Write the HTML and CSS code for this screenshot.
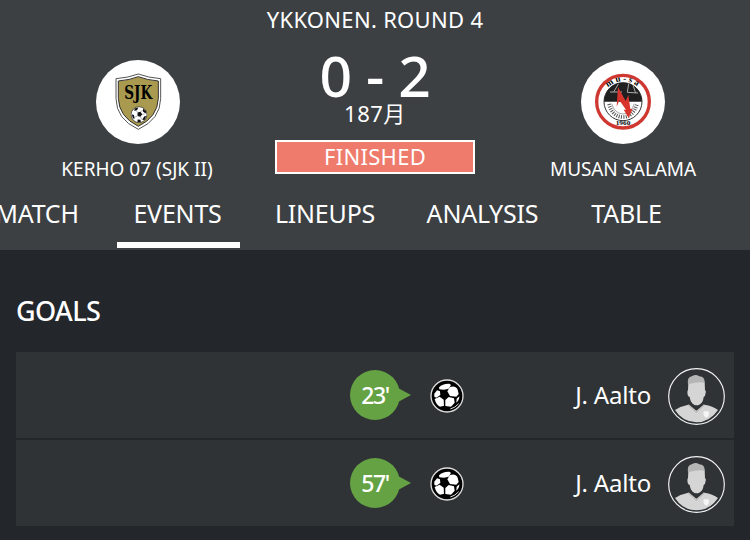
FILE: index.html
```
<!DOCTYPE html>
<html lang="en">
<head>
  <meta charset="UTF-8">
  <title>Kerho 07 (SJK II) - Musan Salama</title>
  <link rel="stylesheet" href="styles.css">
</head>
<body>

<!-- shared icons -->
<svg class="sprite" width="0" height="0">
  <symbol id="ball" viewBox="0 0 102 102">
    <circle cx="51" cy="51" r="48" fill="#000" stroke="#ddd" stroke-width="4"/>
    <g fill="#fff">
      <path d="M27 25 Q38 13 58 14 L63 18 L56 29 L42 32 L28 31Z"/>
      <path d="M60 24 Q76 18 83 32 L86 45 L79 53 L60 51 L52 37Z"/>
      <path d="M13 44 L21 34 L30 37 L31 48 L19 56 L13 53Z"/>
      <path d="M14 60 L29 53 L41 62 L42 80 L30 83 Q18 77 14 60Z"/>
      <path d="M46 63 L56 54 L72 58 L74 71 L63 83 L46 81Z"/>
      <path d="M80 59 L88 52 Q88 64 79 71Z"/>
    </g>
    <path d="M61 90 Q76 86 86 74" fill="none" stroke="#ddd" stroke-width="3"/>
  </symbol>
  <symbol id="player" viewBox="0 0 171 171">
    <circle cx="85.500" cy="85.500" r="83.500" fill="none" stroke="#f2f2f2" stroke-width="3.5"/>
    <path d="M61 46 L60 67 Q57 68 59 80 Q60 86 65 87 Q68 107 80 111 Q87 113 94 110 Q105 105 107 87 Q112 85 113 75 Q115 68 111 67 L110 42 Q98 31 61 46Z" fill="#d5d5d5"/>
    <path d="M60 49 Q56 27 73 24 Q83 18 94 25 Q111 26 110 44 Q91 40 60 49Z" fill="#b5b5b5"/>
    <path d="M21 126 Q39 114 61 110 L85 128 L109 110 Q135 114 150 126 Q125 163 85 163 Q44 162 21 126Z" fill="#d5d5d5"/>
    <path d="M61 110 L85 132 L109 110" fill="none" stroke="#bcbcbc" stroke-width="4"/>
    <path d="M106 131 Q115 127 123 131 Q124 146 115 149 Q106 146 106 131Z" fill="#f5f5f5"/>
  </symbol>
</svg>

<header class="header">
  <div class="round">YKKONEN. ROUND 4</div>

  <div class="match">
    <div class="team home">
      <svg class="logo" viewBox="0 0 252 252">
        <circle cx="126" cy="126" r="126" fill="#fff"/>
        <path d="M60 56 Q98 53 127 42 Q156 53 194 56 L194 116 Q193 178 127 208 Q61 178 60 116Z" fill="#fff" stroke="#555" stroke-width="3"/>
        <path d="M67 63 Q102 60 127 50 Q152 60 187 63 L187 115 Q185 171 127 199 Q69 171 67 115Z" fill="#aa9a50" stroke="#333" stroke-width="3"/>
        <text x="85" y="118" textLength="84" lengthAdjust="spacingAndGlyphs" class="sjk">SJK</text>
        <svg x="104" y="139" width="50" height="50" viewBox="0 0 46 46">
          <circle cx="23" cy="23" r="22" fill="#fff" stroke="#222" stroke-width="2"/>
          <path d="M19 17 L27 15 L32 22 L27 29 L19 27Z M11 6 L21 3 L18 10 L10 13Z M34 6 L43 14 L41 20 L34 14Z M3 22 L9 24 L11 34 L6 33Z M37 28 L43 27 L39 37 L32 38Z M19 36 L27 37 L28 43 L19 43Z" fill="#111"/>
          <path d="M19 17 L15 11 M27 15 L34 11 M32 22 L39 21 M27 29 L32 37 M19 27 L10 30" stroke="#777" stroke-width="1.500"/>
        </svg>
      </svg>
      <div class="team-name">KERHO 07 (SJK II)</div>
    </div>

    <div class="result">
      <div class="score">0 - 2</div>
      <div class="date">187月</div>
      <div class="status">FINISHED</div>
    </div>

    <div class="team away">
      <svg class="logo" viewBox="0 0 252 252">
        <circle cx="126" cy="126" r="126" fill="#fff"/>
        <circle cx="126" cy="125" r="79" fill="#fff" stroke="#cf3830" stroke-width="10"/>
        <circle cx="126" cy="125" r="57" fill="#fff" stroke="#333" stroke-width="3"/>
        <path d="M69 125 A57 57 0 0 1 183 125Z" fill="#202020"/>
        <path d="M87 96 H123 M112 72 L98 96 M143 71 L139 97 L171 99 M156 76 L164 99" fill="none" stroke="#aaa" stroke-width="3"/>
        <path d="M84 132 Q95 171 126 171 Q157 171 168 132" fill="none" stroke="#555" stroke-width="11" stroke-dasharray="3 4"/>
        <path d="M92 131 Q101 161 126 162 Q151 161 160 131" fill="none" stroke="#777" stroke-width="2"/>
        <path d="M107 140 L111 81 L134 123 L142 105 L148 147 L155 146 L143 174 L128 149 L135 149 L115 121Z" fill="#d9342b"/>
        <path id="top" d="M80 83 A66 66 0 0 1 174 84" fill="none"/>
        <text class="musa"><textPath href="#top" textLength="96" startOffset="1">mu-sa</textPath></text>
        <text x="104" y="195" textLength="44" lengthAdjust="spacingAndGlyphs" class="year">1960</text>
      </svg>
      <div class="team-name">MUSAN SALAMA</div>
    </div>
  </div>

  <nav class="tabs">
    <a class="tab">MATCH</a>
    <a class="tab active">EVENTS</a>
    <a class="tab">LINEUPS</a>
    <a class="tab">ANALYSIS</a>
    <a class="tab">TABLE</a>
  </nav>
</header>

<main class="events">
  <h2>GOALS</h2>
  <div class="event">
    <div class="minute">23'</div>
    <svg class="ball"><use href="#ball"/></svg>
    <div class="name">J. Aalto</div>
    <svg class="player"><use href="#player"/></svg>
  </div>
  <div class="event">
    <div class="minute">57'</div>
    <svg class="ball"><use href="#ball"/></svg>
    <div class="name">J. Aalto</div>
    <svg class="player"><use href="#player"/></svg>
  </div>
</main>

</body>
</html>
```
FILE: styles.css
```
* {
  box-sizing: border-box;
}

body {
  margin: 0;
  height: 540px;
  overflow: hidden;
  background-color: #23262b;
  color: white;
  font-family: "Noto Sans", "Noto Sans CJK JP", sans-serif;
  white-space: nowrap;
}

.sprite {
  position: absolute;
}

.header {
  display: flex;
  flex-direction: column;
  height: 250px;
  background-color: #3c4043;
}

.round {
  height: 40px;
  line-height: 38px;
  font-size: 22px;
  letter-spacing: 0.3px;
  text-align: center;
}

.match {
  display: grid;
  grid-template-columns: 275px 200px 275px;
  height: 142px;
}

.team {
  display: flex;
  flex-direction: column;
  align-items: center;
  padding-top: 20px;
}

.home { padding-left: 1px; }
.away { padding-left: 21px; }

.logo {
  width: 84px;
  height: 84px;
}

.team-name {
  margin-top: 11px;
  font-size: 19px;
  line-height: 28px;
  letter-spacing: -0.1px;
}

.home .team-name {
  letter-spacing: 0;
  margin-right: 2px;
}

.sjk {
  font: bold 56px "DejaVu Serif", serif;
}

.musa {
  font: bold 27px "Liberation Serif", serif;
}

.year {
  font: bold 21px "Liberation Serif", serif;
}

.result {
  text-align: center;
}

.score {
  height: 60px;
  line-height: 70px;
  font-size: 57px;
  font-weight: 500;
  letter-spacing: -0.4px;
}

.date {
  height: 40px;
  line-height: 26px;
  font-size: 22px;
  letter-spacing: 0.5px;
}

.status {
  height: 34px;
  line-height: 29px;
  font-size: 22px;
  letter-spacing: 0.3px;
  border: 2px solid white;
  background-color: #ee7b6c;
}

.tabs {
  display: grid;
  grid-template-columns: 114px 123px 128px 145px 101px;
  column-gap: 21px;
  margin-left: -19px;
  padding-left: 1px;
}

.tab {
  height: 66px;
  line-height: 62px;
  font-size: 25px;
  letter-spacing: -0.2px;
  text-align: center;
  display: flex;
  justify-content: center;
}

.tab:first-child {
  padding-right: 4px;
}

.active {
  padding-right: 2px;
  border-bottom: 6px solid white;
}

.events {
  padding: 40px 16px 0;
}

h2 {
  margin: 0;
  height: 62px;
  line-height: 42px;
  font-size: 27px;
  font-weight: 500;
  letter-spacing: -0.6px;
}

.event {
  display: grid;
  grid-template-columns: 50px 34px 1fr 57px;
  align-items: center;
  height: 86px;
  margin-bottom: 2px;
  padding: 0 9px 0 334px;
  background-color: #2f3335;
}

.minute {
  position: relative;
  width: 50px;
  height: 50px;
  line-height: 50px;
  border-radius: 50%;
  background-color: #65a244;
  text-align: center;
  font-size: 23px;
  font-weight: 500;
  letter-spacing: -1.5px;
}

.minute::after {
  content: "";
  position: absolute;
  left: 48px;
  top: 18px;
  border: 7px solid transparent;
  border-left: 13px solid #65a244;
  border-right: 0;
}

.ball {
  width: 34px;
  height: 34px;
  margin-left: 30px;
  margin-top: 2px;
}

.name {
  padding-right: 17px;
  padding-bottom: 2px;
  text-align: right;
  font-size: 24px;
  letter-spacing: -0.2px;
}

.player {
  width: 57px;
  height: 57px;
  margin-top: 2px;
}
```
